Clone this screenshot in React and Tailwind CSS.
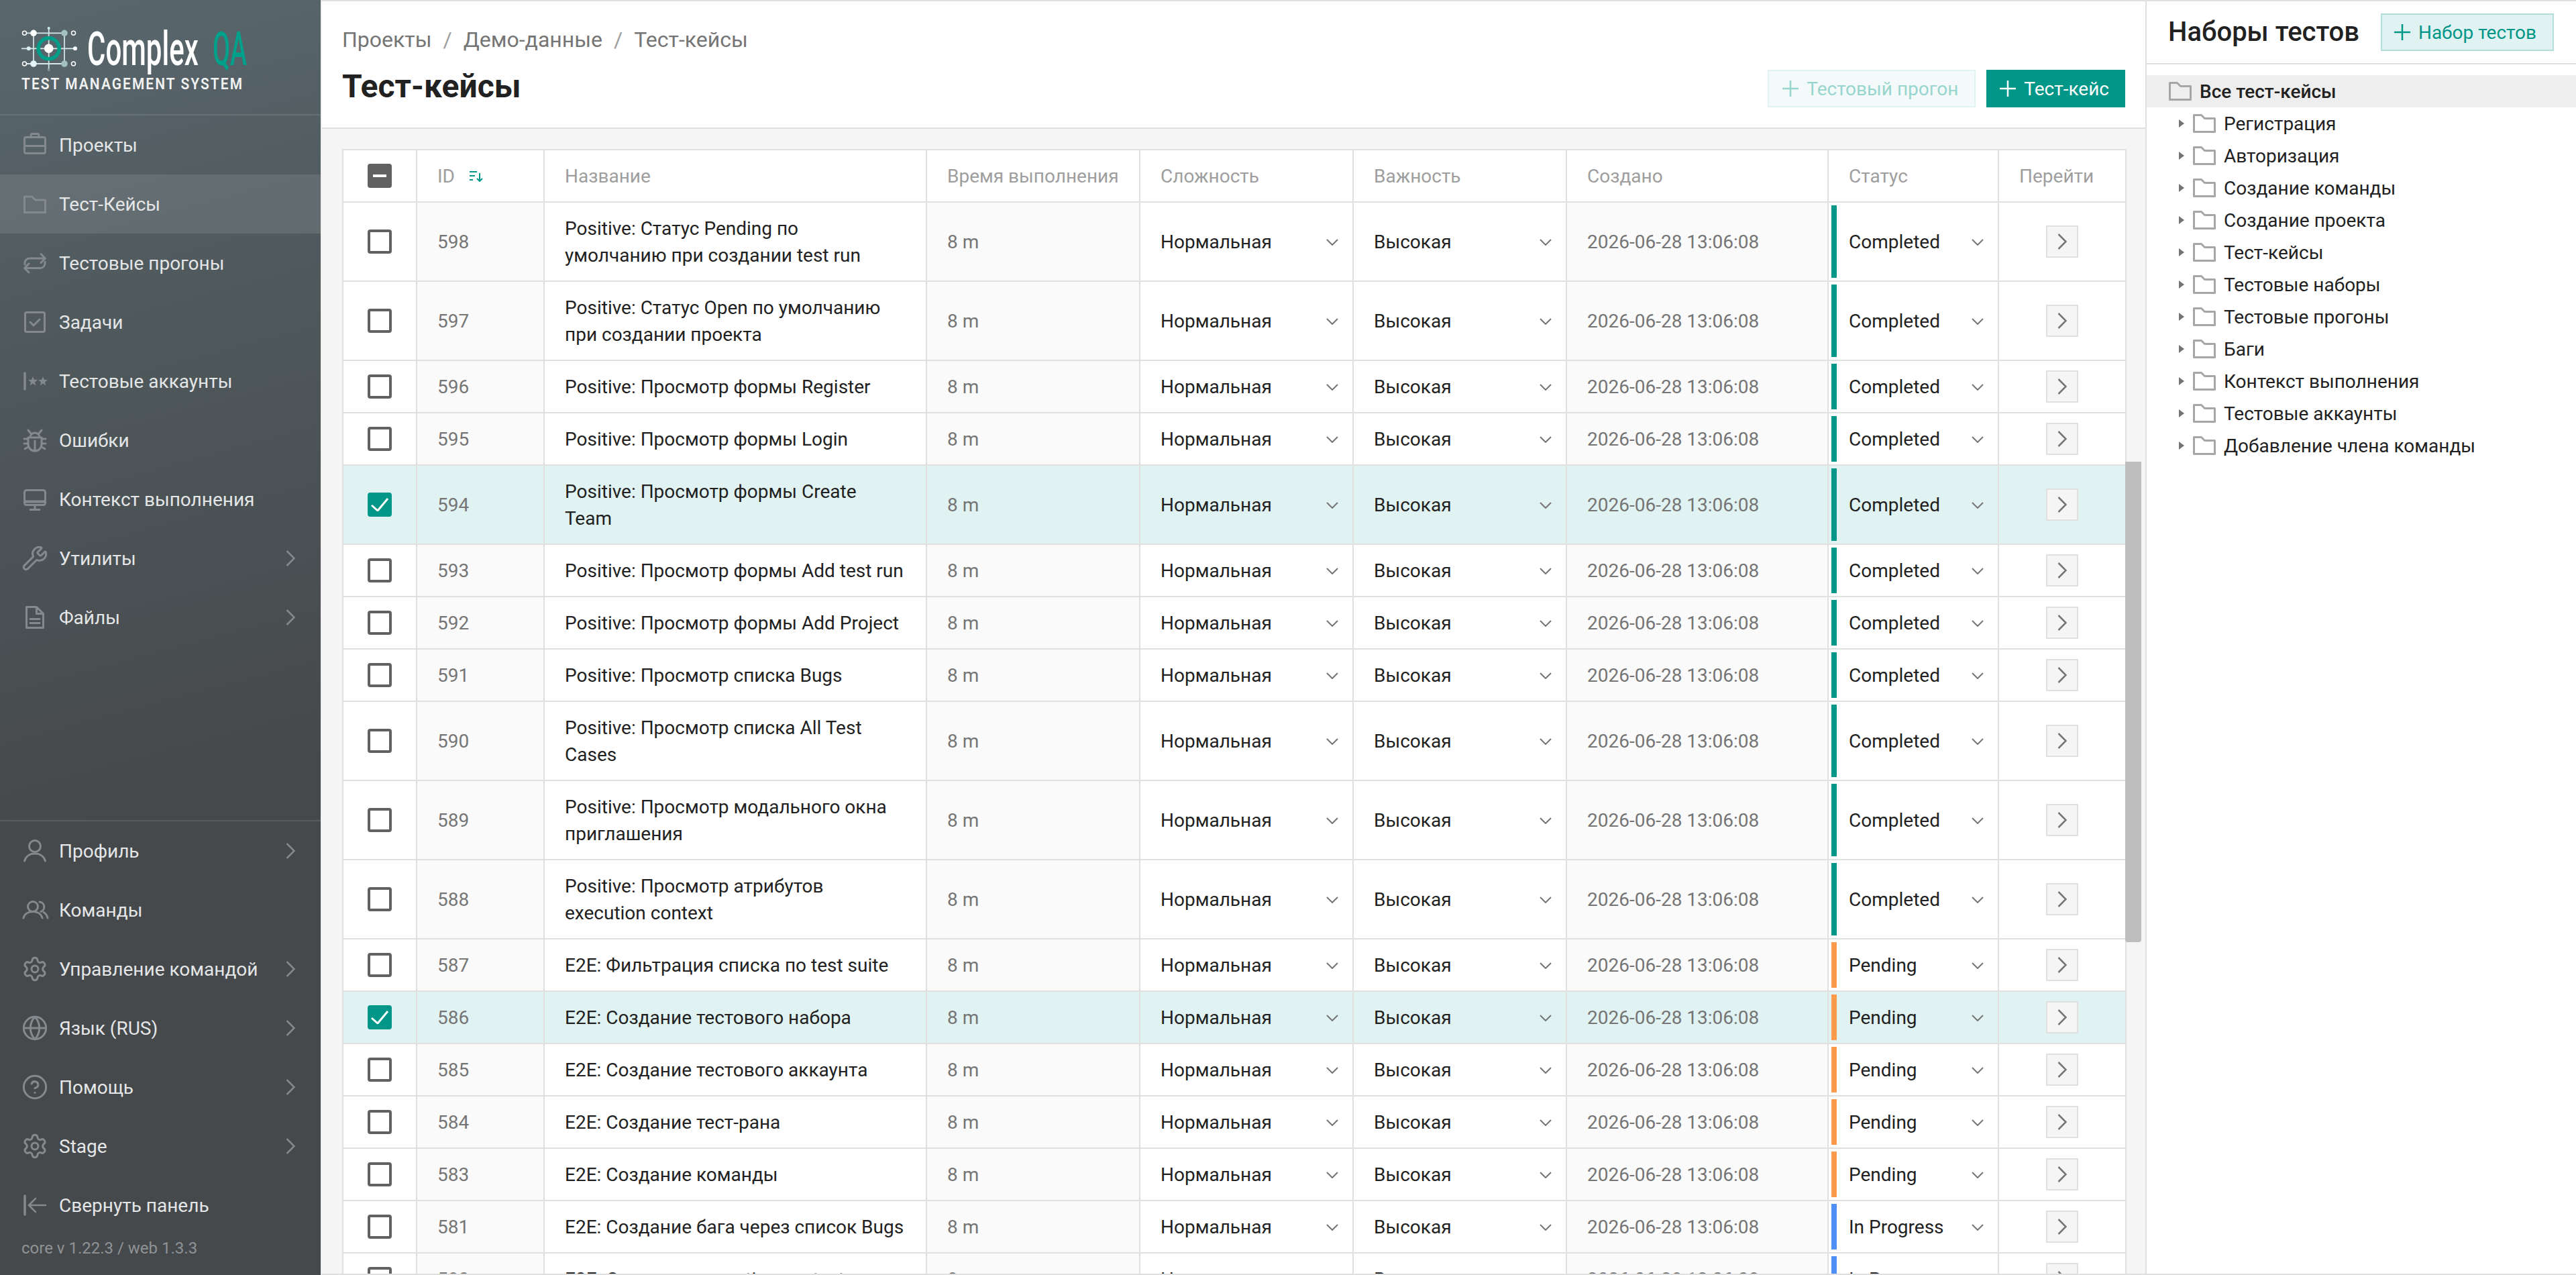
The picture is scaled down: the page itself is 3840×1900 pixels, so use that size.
import { Globe, CircleHelp, Settings, Wrench } from 'lucide-react';

const rows = [
  { id: 598, name: ['Positive: Статус Pending по', 'умолчанию при создании test run'], status: 'Completed' },
  { id: 597, name: ['Positive: Статус Open по умолчанию', 'при создании проекта'], status: 'Completed' },
  { id: 596, name: ['Positive: Просмотр формы Register'], status: 'Completed' },
  { id: 595, name: ['Positive: Просмотр формы Login'], status: 'Completed' },
  { id: 594, name: ['Positive: Просмотр формы Create', 'Team'], status: 'Completed', selected: true },
  { id: 593, name: ['Positive: Просмотр формы Add test run'], status: 'Completed' },
  { id: 592, name: ['Positive: Просмотр формы Add Project'], status: 'Completed' },
  { id: 591, name: ['Positive: Просмотр списка Bugs'], status: 'Completed' },
  { id: 590, name: ['Positive: Просмотр списка All Test', 'Cases'], status: 'Completed' },
  { id: 589, name: ['Positive: Просмотр модального окна', 'приглашения'], status: 'Completed' },
  { id: 588, name: ['Positive: Просмотр атрибутов', 'execution context'], status: 'Completed' },
  { id: 587, name: ['E2E: Фильтрация списка по test suite'], status: 'Pending' },
  { id: 586, name: ['E2E: Создание тестового набора'], status: 'Pending', selected: true },
  { id: 585, name: ['E2E: Создание тестового аккаунта'], status: 'Pending' },
  { id: 584, name: ['E2E: Создание тест-рана'], status: 'Pending' },
  { id: 583, name: ['E2E: Создание команды'], status: 'Pending' },
  { id: 581, name: ['E2E: Создание бага через список Bugs'], status: 'In Progress' },
  { id: 580, name: ['E2E: Создание execution context'], status: 'In Progress' },
];

const statusBar = {
  Completed: 'bg-[#009688]',
  Pending: 'bg-[#ff9a4d]',
  'In Progress': 'bg-[#4f8ff7]',
};

const suites = [
  'Регистрация',
  'Авторизация',
  'Создание команды',
  'Создание проекта',
  'Тест-кейсы',
  'Тестовые наборы',
  'Тестовые прогоны',
  'Баги',
  'Контекст выполнения',
  'Тестовые аккаунты',
  'Добавление члена команды',
];

const gridCols = 'grid grid-cols-[110px_190px_570px_318px_318px_318px_390px_254px_190px]';

function Svg({ children }) {
  return (
    <svg
      width="36"
      height="36"
      viewBox="0 0 36 36"
      fill="none"
      stroke="currentColor"
      strokeWidth="3"
      strokeLinecap="round"
      strokeLinejoin="round"
      className="overflow-visible"
    >
      {children}
    </svg>
  );
}

const BriefcaseIcon = () => (
  <Svg>
    <rect x="2.5" y="6.5" width="31" height="24" rx="2.5" />
    <path d="M2.5 19.5h31M12 6V3.5a2 2 0 0 1 2-2h8a2 2 0 0 1 2 2V6" />
  </Svg>
);
const FolderIcon = () => (
  <Svg>
    <path d="M2.5 7h11l5 5h15v18.5h-31z" />
  </Svg>
);
const RepeatIcon = () => (
  <Svg>
    <path d="M3 20v-2a7 7 0 0 1 7-7h23M27 4.5l6.5 6.5-6.5 6.5M33 16.5v2a7 7 0 0 1-7 7H3M9 19l-6.5 6.5L9 32" />
  </Svg>
);
const CheckIcon = () => (
  <Svg>
    <rect x="3.5" y="3.5" width="29" height="29" rx="2" />
    <path d="M11 18l5 5 9-9" />
  </Svg>
);
const AccountsIcon = () => (
  <Svg>
    <path d="M3 6v24" strokeWidth="3.5" />
    <g fill="currentColor" stroke="none">
      <polygon points="15,11 16.9,15.8 22,16.1 18,19.4 19.3,24.4 15,21.6 10.7,24.4 12,19.4 8,16.1 13.1,15.8" />
      <polygon points="30,11 31.9,15.8 37,16.1 33,19.4 34.3,24.4 30,21.6 25.7,24.4 27,19.4 23,16.1 28.1,15.8" />
    </g>
  </Svg>
);
const BugIcon = () => (
  <Svg>
    <path d="M8 14h20v10a10 10 0 0 1-20 0zM11 14a7 7 0 0 1 14 0M18 19v14M8 3l4 5M28 3l-4 5M2 16h6M2 23h6M3 31l5-3M34 16h-6M34 23h-6M33 31l-5-3" />
  </Svg>
);
const MonitorIcon = () => (
  <Svg>
    <rect x="2.5" y="4.5" width="31" height="22" rx="3" />
    <path d="M3 21.5h30" strokeWidth="4" />
    <path d="M18 27v6M11 33.5h14" />
  </Svg>
);
const FileIcon = () => (
  <Svg>
    <path d="M5.5 2.5h15l10 10v21h-25zM20.5 3v9.5h9.5M11 20.5h14M11 26.5h14" />
  </Svg>
);
const UserIcon = () => (
  <Svg>
    <circle cx="18" cy="11" r="8.5" />
    <path d="M2.5 33c2-7 8-11 15.5-11s13.5 4 15.5 11" />
  </Svg>
);
const UsersIcon = () => (
  <Svg>
    <circle cx="15" cy="13" r="7.5" />
    <path d="M1 30c1.5-6 7-9.5 14-9.5S27.500 24 29 30M25 6a7.5 7.5 0 0 1 2 14.500M31 21.5c3 1.5 5 4.5 6 8.5" />
  </Svg>
);
const CollapseIcon = () => (
  <Svg>
    <path d="M3 4v28" strokeWidth="3.5" />
    <path d="M9 18h25M19 8L9 18l10 10" strokeWidth="2.5" />
  </Svg>
);
const lucideIcon = Icon => () => <Icon size={40} strokeWidth={1.8} className="-m-[2px]" />;

const topNav = [
  { label: 'Проекты', icon: BriefcaseIcon },
  { label: 'Тест-Кейсы', icon: FolderIcon, active: true },
  { label: 'Тестовые прогоны', icon: RepeatIcon },
  { label: 'Задачи', icon: CheckIcon },
  { label: 'Тестовые аккаунты', icon: AccountsIcon },
  { label: 'Ошибки', icon: BugIcon },
  { label: 'Контекст выполнения', icon: MonitorIcon },
  { label: 'Утилиты', icon: lucideIcon(Wrench), arrow: true },
  { label: 'Файлы', icon: FileIcon, arrow: true },
];

const bottomNav = [
  { label: 'Профиль', icon: UserIcon, arrow: true },
  { label: 'Команды', icon: UsersIcon },
  { label: 'Управление командой', icon: lucideIcon(Settings), arrow: true },
  { label: 'Язык (RUS)', icon: lucideIcon(Globe), arrow: true },
  { label: 'Помощь', icon: lucideIcon(CircleHelp), arrow: true },
  { label: 'Stage', icon: lucideIcon(Settings), arrow: true },
  { label: 'Свернуть панель', icon: CollapseIcon },
];

function NavItem({ label, icon: Icon, arrow, active }) {
  return (
    <div className={`flex h-[88px] items-center pl-[34px] pr-[38px] ${active ? 'bg-white/10' : ''}`}>
      <span className="mr-[18px] flex h-[36px] w-[36px] items-center justify-center text-[#83898c]">
        <Icon />
      </span>
      <span className="pt-[2px] text-[28px] text-[#e4e6e7]">{label}</span>
      {arrow && (
        <svg width="14" height="24" viewBox="0 0 14 24" fill="none" stroke="#83898c" strokeWidth="2.5" className="ml-auto">
          <path d="M1.5 1l11 11-11 11" />
        </svg>
      )}
    </div>
  );
}

function Logo() {
  return (
    <div className="h-[170px] pl-[32px] pt-[40px]">
      <div className="flex h-[66px]">
        <svg width="84" height="66" viewBox="0 0 84 66" fill="none" className="shrink-0">
          <path d="M7 9.3h54M7 55h54M0 32.3h78" stroke="#d7e9eb" strokeWidth="1.8" />
          <path d="M18 9v46M64 9v46M40.7 1v64" stroke="#cfe3e5" strokeWidth="1.8" />
          <circle cx="40.7" cy="32.3" r="15.5" stroke="#009e88" strokeWidth="5.5" />
          <circle cx="40.7" cy="32.3" r="6.8" fill="#fff" />
          <circle cx="18" cy="9.3" r="4.8" fill="#fff" />
          <circle cx="18" cy="55" r="4.8" fill="#e3f5fb" />
          <circle cx="64" cy="9.3" r="4.8" fill="#a4c0c0" />
          <circle cx="64" cy="55" r="4.8" fill="#a4c0c0" />
          <circle cx="4.5" cy="9.3" r="3" stroke="#fff" strokeWidth="1.5" />
          <circle cx="4.5" cy="55" r="3" stroke="#fff" strokeWidth="1.5" />
          <circle cx="77.5" cy="9.3" r="3" stroke="#fff" strokeWidth="1.5" />
          <circle cx="77.5" cy="55" r="3" stroke="#fff" strokeWidth="1.5" />
          <circle cx="10.7" cy="32.3" r="3" fill="#d8eef0" />
          <circle cx="80" cy="32.3" r="3" fill="#fff" />
          <circle cx="40.7" cy="2" r="2" fill="#cdeef0" />
          <circle cx="40.7" cy="64" r="2" fill="#7f9a9a" />
        </svg>
        <div className="ml-[14px] flex whitespace-nowrap text-[70px] font-medium leading-[66px]">
          <span className="w-[187px] origin-left scale-x-[0.6] text-white">Complex</span>
          <span className="origin-left scale-x-[0.54] text-[#00a08a]">QA</span>
        </div>
      </div>
      <div className="mt-[4px] origin-left scale-x-[0.87] whitespace-nowrap text-[24px] font-semibold leading-[30px] tracking-[2.4px] text-[#f2f2f2]">
        TEST MANAGEMENT SYSTEM
      </div>
    </div>
  );
}

function Sidebar() {
  return (
    <aside className="flex h-full w-[478px] shrink-0 flex-col bg-[linear-gradient(165deg,#59676d_0%,#4e575a_30%,#46494c_62%,#45494c_100%)]">
      <Logo />
      <div className="border-t-2 border-white/10">
        {topNav.map(item => (
          <NavItem key={item.label} {...item} />
        ))}
      </div>
      <div className="flex-1" />
      <div className="border-t-2 border-white/10">
        {bottomNav.map(item => (
          <NavItem key={item.label} {...item} />
        ))}
        <div className="h-[60px] pl-[32px] text-[24px] leading-[40px] text-[#8f9396]">
          core v 1.22.3 / web 1.3.3
        </div>
      </div>
    </aside>
  );
}

function PlusIcon({ className }) {
  return (
    <svg width="24" height="24" viewBox="0 0 24 24" fill="none" stroke="currentColor" strokeWidth="2.5" className={className}>
      <path d="M12 0v24M0 12h24" />
    </svg>
  );
}

function ChevronDown() {
  return (
    <svg width="18" height="10" viewBox="0 0 18 10" fill="none" stroke="#757575" strokeWidth="2" className="shrink-0">
      <path d="M1 1l8 8 8-8" />
    </svg>
  );
}

function Checkbox({ state }) {
  if (state === 'mixed') {
    return (
      <span className="flex h-[36px] w-[36px] items-center justify-center rounded-[4px] bg-[#616161]">
        <span className="h-[4px] w-[20px] bg-white" />
      </span>
    );
  }
  if (state === 'checked') {
    return (
      <span className="flex h-[36px] w-[36px] items-center justify-center rounded-[4px] bg-[#009688]">
        <svg width="28" height="20" viewBox="0 0 28 20" fill="none" stroke="#fff" strokeWidth="3">
          <path d="M2 11l9 8L26 1" />
        </svg>
      </span>
    );
  }
  return <span className="h-[36px] w-[36px] rounded-[4px] border-4 border-[#616161]" />;
}

function Cell({ className = '', children }) {
  return <div className={`flex items-center border-r-2 border-[#e0e0e0] ${className}`}>{children}</div>;
}

function SelectCell({ value }) {
  return (
    <Cell className="justify-between pl-[30px] pr-[21px] pt-[2px] text-[#212121]">
      <span>{value}</span>
      <ChevronDown />
    </Cell>
  );
}

function HeaderRow() {
  const heads = ['Название', 'Время выполнения', 'Сложность', 'Важность', 'Создано', 'Статус', 'Перейти'];
  return (
    <div className={`${gridCols} h-[78px] border-b-2 border-[#e0e0e0] bg-white text-[#9e9e9e]`}>
      <Cell className="justify-center">
        <Checkbox state="mixed" />
      </Cell>
      <Cell className="pl-[30px] pt-[2px]">
        <span>ID</span>
        <svg width="20" height="16" viewBox="0 0 20 16" fill="none" stroke="#009688" strokeWidth="2" className="ml-[22px]">
          <path d="M0 1h11M0 7h8M0 13h5M15 3v12M11 11l4 4 4-4" />
        </svg>
      </Cell>
      {heads.map((head, i) => (
        <Cell key={head} className={`pl-[30px] pt-[2px] ${i === heads.length - 1 ? 'border-r-0' : ''}`}>
          {head}
        </Cell>
      ))}
    </div>
  );
}

function Row({ row }) {
  const shade = row.selected ? '' : 'bg-[#fafafa]';
  return (
    <div className={`${gridCols} border-b-2 border-[#e0e0e0] ${row.selected ? 'bg-[#e0f2f1]' : 'bg-white'}`}>
      <Cell className="justify-center">
        <Checkbox state={row.selected ? 'checked' : 'empty'} />
      </Cell>
      <Cell className={`pl-[30px] pt-[2px] text-[#757575] ${shade}`}>{row.id}</Cell>
      <Cell className="pb-[17px] pl-[30px] pt-[19px] text-[#212121]">
        <div className="whitespace-nowrap">
          {row.name.map(line => (
            <div key={line}>{line}</div>
          ))}
        </div>
      </Cell>
      <Cell className={`pl-[30px] pt-[2px] text-[#757575] ${shade}`}>8 m</Cell>
      <SelectCell value="Нормальная" />
      <SelectCell value="Высокая" />
      <Cell className={`pl-[30px] pt-[2px] text-[#757575] ${shade}`}>2026-06-28 13:06:08</Cell>
      <Cell className="items-stretch p-[4px] pr-[21px] text-[#212121]">
        <span className={`w-[8px] shrink-0 ${statusBar[row.status]}`} />
        <span className="ml-[18px] flex flex-1 items-center justify-between pt-[2px]">
          <span>{row.status}</span>
          <ChevronDown />
        </span>
      </Cell>
      <Cell className="justify-center border-r-0">
        <span className="flex h-[48px] w-[48px] items-center justify-center border-2 border-[#e0e0e0] bg-[#f5f5f5]">
          <svg width="14" height="24" viewBox="0 0 14 24" fill="none" stroke="#757575" strokeWidth="2.5">
            <path d="M1.5 1l11 11-11 11" />
          </svg>
        </span>
      </Cell>
    </div>
  );
}

function Main() {
  return (
    <main className="flex w-[2720px] shrink-0 flex-col border-r-2 border-[#e0e0e0]">
      <header className="flex h-[190px] shrink-0 items-end justify-between border-b-2 border-[#e0e0e0] bg-white px-[30px] pb-[30px]">
        <div className="pb-[3px]">
          <div className="flex text-[32px] leading-[44px] text-[#757575]">
            <span>Проекты</span>
            <span className="mx-[17px] text-[#9e9e9e]">/</span>
            <span>Демо-данные</span>
            <span className="mx-[17px] text-[#9e9e9e]">/</span>
            <span>Тест-кейсы</span>
          </div>
          <h1 className="mt-[20px] text-[48px] font-bold leading-[56px] text-[#212121]">Тест-кейсы</h1>
        </div>
        <div className="flex gap-[16px] text-[28px]">
          <button className="flex h-[56px] items-center border-2 border-[#e0f2f1] bg-[#f3faf9] pl-[20px] pr-[24px] text-[#99d5cf]">
            <PlusIcon className="mr-[12px]" />
            <span className="pt-[2px]">Тестовый прогон</span>
          </button>
          <button className="flex h-[56px] items-center bg-[#009688] pl-[20px] pr-[24px] text-white">
            <PlusIcon className="mr-[12px]" />
            <span className="pt-[2px]">Тест-кейс</span>
          </button>
        </div>
      </header>
      <div className="relative min-h-0 flex-1 overflow-hidden bg-[#f5f5f5] pl-[30px] pt-[30px] text-[28px] leading-[40px]">
        <div className="w-[2660px] border-x-2 border-t-2 border-[#e0e0e0]">
          <HeaderRow />
          {rows.map(row => (
            <Row key={row.id} row={row} />
          ))}
        </div>
        <div className="absolute right-[6px] top-[496px] h-[716px] w-[24px] rounded-b-[4px] bg-[#bdbdbd]" />
      </div>
    </main>
  );
}

function TreeFolder() {
  return (
    <svg width="34" height="28" viewBox="0 0 34 28" fill="none" stroke="#a6a6a6" strokeWidth="3" strokeLinejoin="round" className="shrink-0">
      <path d="M1.5 1.5h11l5 5h15v20h-31z" />
    </svg>
  );
}

function SuitesPanel() {
  return (
    <section className="min-w-0 flex-1 bg-white">
      <div className="flex h-[94px] items-center justify-between border-b-2 border-[#e0e0e0] pl-[32px] pr-[33px]">
        <h2 className="text-[40px] font-medium text-[#212121]">Наборы тестов</h2>
        <button className="flex h-[56px] items-center border-2 border-[#b2dfdb] bg-[#e0f2f1] pl-[18px] pr-[24px] text-[28px] text-[#009688]">
          <PlusIcon className="mr-[12px]" />
          <span className="pt-[2px]">Набор тестов</span>
        </button>
      </div>
      <div className="pt-[16px] text-[28px] text-[#212121]">
        <div className="flex h-[48px] items-center bg-[#eeeeee] pl-[33px] font-medium">
          <TreeFolder />
          <span className="ml-[12px] pt-[2px]">Все тест-кейсы</span>
        </div>
        {suites.map(name => (
          <div key={name} className="flex h-[48px] items-center pl-[48px]">
            <span className="mr-[13px] h-0 w-0 border-y-[6px] border-l-[8px] border-y-transparent border-l-[#757575]" />
            <TreeFolder />
            <span className="ml-[12px] pt-[2px]">{name}</span>
          </div>
        ))}
      </div>
    </section>
  );
}

export default function App() {
  return (
    <div className="flex h-[1900px] w-[3840px] overflow-hidden bg-white font-['Roboto',sans-serif]">
      <Sidebar />
      <div className="flex h-full flex-1 border-y-2 border-l-2 border-y-[#e0e0e0] border-l-[#f0f0f0]">
        <Main />
        <SuitesPanel />
      </div>
    </div>
  );
}
